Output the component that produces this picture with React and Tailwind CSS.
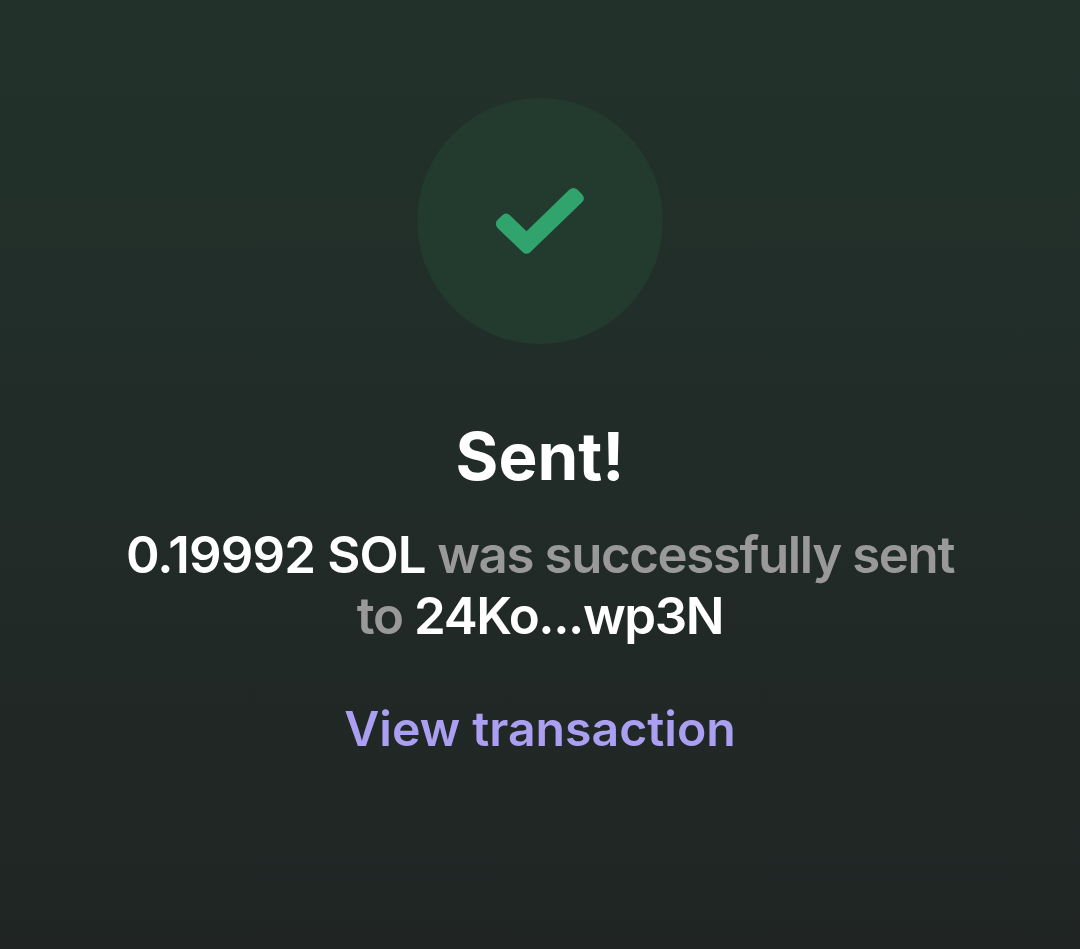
import React from "react";

const transfer = {
  amount: "0.19992 SOL",
  recipient: "24Ko...wp3N",
};

const CheckIcon = () => (
  <svg width="90" height="68" viewBox="0 0 90 68" fill="#30a46c">
    <path d="M2.500 32.800 8 27.800Q11.300 25 14.700 28L31.500 44.300 74.500 2.500Q78.500 -.6 82.300 2.500L87.300 7.600Q90.600 11.500 87.300 15L35.200 65.200Q31.500 68.400 27.800 65.200L2.500 41Q-.8 36.800 2.500 32.800Z" />
  </svg>
);

const App = () => {
  return (
    <div className="flex h-screen w-full flex-col items-center bg-linear-to-b from-[#22322b] to-[#202524] pt-[98px] font-['Inter',sans-serif] text-center">
      <div className="flex size-[246px] items-center justify-center rounded-full bg-[#233a2e]">
        <CheckIcon />
      </div>

      <h1 className="mt-[73px] text-[65.5px] leading-[80px] font-bold text-white">
        Sent!
      </h1>

      <p className="mt-[27px] text-[51px] leading-[61px] font-semibold tracking-[-1.4px] text-[#999999]">
        <span className="tracking-[-0.85px] text-white">{transfer.amount}</span>{" "}
        was successfully sent
        <br />
        to <span className="text-white">{transfer.recipient}</span>
      </p>

      <button className="mt-[53px] text-[48.2px] leading-[60px] font-semibold text-[#ab9ff2]">
        View transaction
      </button>
    </div>
  );
};

export default App;
